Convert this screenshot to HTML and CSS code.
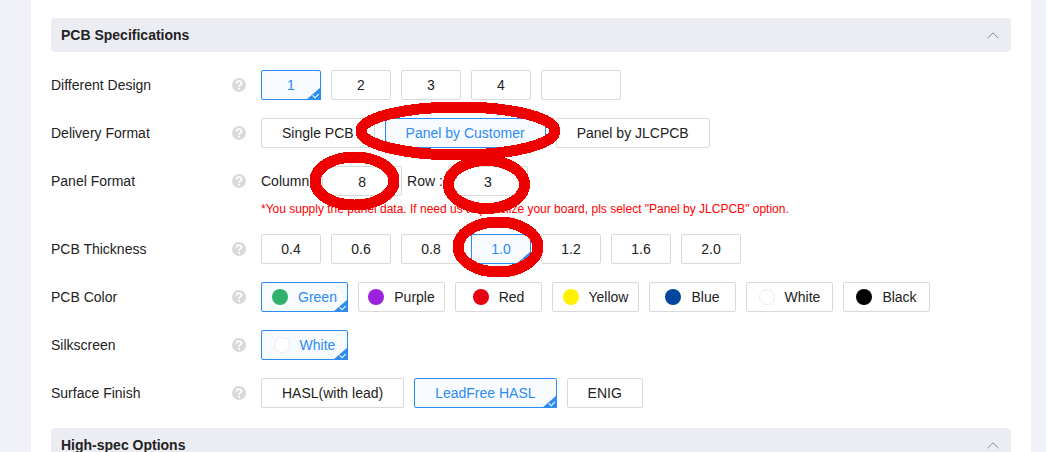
FILE: index.html
```
<!DOCTYPE html>
<html lang="en">
<head>
<meta charset="utf-8">
<title>PCB Specifications</title>
<link rel="stylesheet" href="styles.css">
</head>
<body>
<svg class="sprite" aria-hidden="true">
  <symbol id="help" viewBox="0 0 14 14"><circle cx="7" cy="7" r="7" fill="#dadada"/><path d="M4.6 5.5C4.6 2.4 9.5 2.5 9.5 5.3C9.5 6.9 7.1 6.9 7.1 8.8" fill="none" stroke="#fff" stroke-width="1.8"/><circle cx="7.1" cy="10.8" r="1.1" fill="#fff"/></symbol>
  <symbol id="chevron" viewBox="0 0 12 7"><path d="M.5 6.2L6 .9L11.5 6.2" fill="none" stroke="#8c8c8c"/></symbol>
  <symbol id="tick" viewBox="0 0 15 13"><path d="M15 0V13H0Z" fill="#2d8cf0"/><path d="M6.6 8.4L9.1 10.8L12.8 6.9" fill="none" stroke="#fff" stroke-width="1.1"/></symbol>
</svg>
<main class="panel">
  <button type="button" class="section" aria-expanded="true"><span>PCB Specifications</span><svg class="chevron"><use href="#chevron"/></svg></button>
  <form class="rows">
    <div class="row">
      <span class="name" id="l-design">Different Design</span>
      <button type="button" class="help" aria-label="About different design"><svg><use href="#help"/></svg></button>
      <div class="options" role="radiogroup" aria-labelledby="l-design">
        <label class="option short"><input type="radio" name="design" checked>1<svg class="tick"><use href="#tick"/></svg></label>
        <label class="option short"><input type="radio" name="design">2</label>
        <label class="option short"><input type="radio" name="design">3</label>
        <label class="option short"><input type="radio" name="design">4</label>
        <input type="text" class="field" aria-label="Other number of designs">
      </div>
    </div>
    <div class="row">
      <span class="name" id="l-delivery">Delivery Format</span>
      <button type="button" class="help" aria-label="About delivery format"><svg><use href="#help"/></svg></button>
      <div class="options" role="radiogroup" aria-labelledby="l-delivery">
        <label class="option"><input type="radio" name="delivery">Single PCB</label>
        <label class="option"><input type="radio" name="delivery" checked>Panel by Customer<svg class="tick"><use href="#tick"/></svg></label>
        <label class="option"><input type="radio" name="delivery">Panel by JLCPCB</label>
      </div>
    </div>
    <div class="row">
      <span class="name">Panel Format</span>
      <button type="button" class="help" aria-label="About panel format"><svg><use href="#help"/></svg></button>
      <div class="dimensions">
        <label for="column">Column :</label><input type="text" class="field" id="column" value="8">
        <label for="row">Row :</label><input type="text" class="field" id="row" value="3">
      </div>
      <p class="note">*You supply the panel data. If need us to panelize your board, pls select "Panel by JLCPCB" option.</p>
    </div>
    <div class="row">
      <span class="name" id="l-thick">PCB Thickness</span>
      <button type="button" class="help" aria-label="About PCB thickness"><svg><use href="#help"/></svg></button>
      <div class="options" role="radiogroup" aria-labelledby="l-thick">
        <label class="option short"><input type="radio" name="thick">0.4</label>
        <label class="option short"><input type="radio" name="thick">0.6</label>
        <label class="option short"><input type="radio" name="thick">0.8</label>
        <label class="option short"><input type="radio" name="thick" checked>1.0<svg class="tick"><use href="#tick"/></svg></label>
        <label class="option short"><input type="radio" name="thick">1.2</label>
        <label class="option short"><input type="radio" name="thick">1.6</label>
        <label class="option short"><input type="radio" name="thick">2.0</label>
      </div>
    </div>
    <div class="row">
      <span class="name" id="l-color">PCB Color</span>
      <button type="button" class="help" aria-label="About PCB color"><svg><use href="#help"/></svg></button>
      <div class="options" role="radiogroup" aria-labelledby="l-color">
        <label class="option color"><input type="radio" name="color" checked><i class="dot green"></i>Green<svg class="tick"><use href="#tick"/></svg></label>
        <label class="option color"><input type="radio" name="color"><i class="dot purple"></i>Purple</label>
        <label class="option color"><input type="radio" name="color"><i class="dot red"></i>Red</label>
        <label class="option color"><input type="radio" name="color"><i class="dot yellow"></i>Yellow</label>
        <label class="option color"><input type="radio" name="color"><i class="dot blue"></i>Blue</label>
        <label class="option color"><input type="radio" name="color"><i class="dot white"></i>White</label>
        <label class="option color"><input type="radio" name="color"><i class="dot black"></i>Black</label>
      </div>
    </div>
    <div class="row">
      <span class="name" id="l-silk">Silkscreen</span>
      <button type="button" class="help" aria-label="About silkscreen"><svg><use href="#help"/></svg></button>
      <div class="options" role="radiogroup" aria-labelledby="l-silk">
        <label class="option color"><input type="radio" name="silk" checked><i class="dot white"></i>White<svg class="tick"><use href="#tick"/></svg></label>
      </div>
    </div>
    <div class="row">
      <span class="name" id="l-finish">Surface Finish</span>
      <button type="button" class="help" aria-label="About surface finish"><svg><use href="#help"/></svg></button>
      <div class="options" role="radiogroup" aria-labelledby="l-finish">
        <label class="option"><input type="radio" name="finish">HASL(with lead)</label>
        <label class="option"><input type="radio" name="finish" checked>LeadFree HASL<svg class="tick"><use href="#tick"/></svg></label>
        <label class="option"><input type="radio" name="finish">ENIG</label>
      </div>
    </div>
  </form>
  <button type="button" class="section" aria-expanded="true"><span>High-spec Options</span><svg class="chevron"><use href="#chevron"/></svg></button>
</main>
<svg class="marks" width="600" height="300" fill="none" stroke="#ee0000" stroke-width="11" shape-rendering="crispEdges" aria-hidden="true">
  <ellipse cx="458" cy="131" rx="97" ry="24"/>
  <ellipse cx="354.5" cy="181" rx="39.5" ry="24"/>
  <ellipse cx="486.5" cy="184.5" rx="38" ry="24"/>
  <ellipse cx="498" cy="247" rx="40" ry="25"/>
</svg>
</body>
</html>
```
FILE: styles.css
```
* { box-sizing: border-box; }
html { height: 100%; overflow: hidden; }
body {
  margin: 0;
  min-height: 100%;
  padding: 0 15px 0 31px;
  background: #f1f2f7;
  color: #222;
  font: 14px/20px "Liberation Sans", Arial, sans-serif;
}
.sprite { display: none; }
.panel { padding: 18px 20px 0; background: #fff; }
.section {
  display: flex;
  align-items: center;
  justify-content: space-between;
  width: 100%;
  height: 34px;
  padding: 0 12px 0 10px;
  border: 0;
  border-radius: 4px;
  background: #ecedf3;
  color: #222;
  font: bold 14px/20px "Liberation Sans", Arial, sans-serif;
}
.chevron { width: 12px; height: 7px; }
.rows { display: grid; gap: 18px; padding: 18px 0 20px; }
.row {
  display: grid;
  grid-template-columns: 181px 14px 1fr;
  align-items: center;
}
.help { width: 14px; height: 14px; padding: 0; border: 0; background: none; }
.help svg { display: block; width: 14px; height: 14px; }
.options { display: flex; gap: 10px; margin-left: 15px; }
.option {
  position: relative;
  display: flex;
  align-items: center;
  justify-content: center;
  height: 30px;
  padding: 0 20px;
  border: 1px solid #d9d9d9;
  border-radius: 2px;
  background: #fff;
  white-space: nowrap;
}
.option input { position: absolute; inset: 0; margin: 0; opacity: 0; }
.option:has(:checked) { border-color: #2d8cf0; background: #f7faff; color: #2d8cf0; }
.short { width: 60px; padding: 0; }
.color { width: 87px; padding: 0; gap: 10px; }
.tick { position: absolute; right: -1px; bottom: -1px; width: 15px; height: 13px; }
.dot { width: 16px; height: 16px; border-radius: 50%; }
.green { background: #31b16c; }
.purple { background: #9b22dc; }
.red { background: #e60012; }
.yellow { background: #fff100; }
.blue { background: #00479d; }
.white { border: 1px solid #ececec; background: #fff; }
.black { background: #000; }
.field {
  width: 80px;
  height: 30px;
  padding: 2px 0 0;
  border: 1px solid #d9d9d9;
  border-radius: 2px;
  background: #fff;
  color: #222;
  font: 14px/20px "Liberation Sans", Arial, sans-serif;
  text-align: center;
}
.dimensions { display: flex; align-items: center; gap: 5px; margin-left: 15px; }
.note {
  grid-column: 3;
  margin: 6px 0 0 15px;
  color: #f00;
  font-size: 12px;
  line-height: 14px;
}
.marks { position: absolute; left: 0; top: 0; pointer-events: none; }
```
